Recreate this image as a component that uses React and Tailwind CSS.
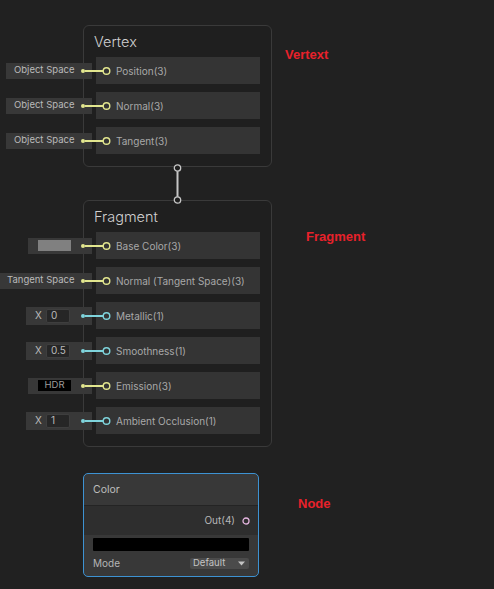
import React from "react";

const YELLOW = "#e2e68e";
const CYAN = "#7fd4dc";
const PINK = "#e3b4de";

const vertexPorts = [
  { label: "Position(3)", color: YELLOW, input: { kind: "text", text: "Object Space", box: "w-[86px] pl-[8px]" } },
  { label: "Normal(3)", color: YELLOW, input: { kind: "text", text: "Object Space", box: "w-[86px] pl-[8px]" } },
  { label: "Tangent(3)", color: YELLOW, input: { kind: "text", text: "Object Space", box: "w-[86px] pl-[8px]" } },
];

const fragmentPorts = [
  { label: "Base Color(3)", color: YELLOW, input: { kind: "swatch" } },
  { label: "Normal (Tangent Space)(3)", color: YELLOW, input: { kind: "text", text: "Tangent Space", box: "w-[92px] pl-[7px]" } },
  { label: "Metallic(1)", color: CYAN, input: { kind: "float", value: "0" } },
  { label: "Smoothness(1)", color: CYAN, input: { kind: "float", value: "0.5" } },
  { label: "Emission(3)", color: YELLOW, input: { kind: "hdr" } },
  { label: "Ambient Occlusion(1)", color: CYAN, input: { kind: "float", value: "1" } },
];

function InputField({ input }) {
  if (input.kind === "text") {
    return (
      <div className={`h-[16px] bg-[#383838] flex items-center text-[9.5px] text-[#bababa] ${input.box}`}>
        {input.text}
      </div>
    );
  }
  if (input.kind === "swatch") {
    return (
      <div className="h-[16px] w-[64px] bg-[#383838] flex items-center pl-[10px]">
        <div className="h-[11px] w-[33px] bg-[#808080]" />
      </div>
    );
  }
  if (input.kind === "hdr") {
    return (
      <div className="h-[16px] w-[64px] bg-[#383838] flex items-center pl-[10px]">
        <div className="h-[11px] w-[33px] bg-black flex items-center justify-center text-[9.5px] text-[#9c9c9c]">
          HDR
        </div>
      </div>
    );
  }
  return (
    <div className="h-[18px] w-[66px] bg-[#383838] flex items-center pl-[9px] text-[10px] text-[#bababa]">
      <span className="w-[11px]">X</span>
      <div className="h-[14px] w-[24px] bg-[#262626] border border-[#3e3e3e] rounded-[2px] flex items-center pl-[4px]">
        {input.value}
      </div>
    </div>
  );
}

// dot on the field, short wire and the open port circle
function Wire({ color }) {
  return (
    <svg className="absolute left-[79px] top-0" width="34" height="27">
      <circle cx="4" cy="14" r="2" fill={color} />
      <line x1="6" y1="14" x2="24" y2="14" stroke={color} strokeWidth="2" />
      <circle cx="27.5" cy="14" r="3.3" fill="#343434" stroke={color} strokeWidth="1.4" />
    </svg>
  );
}

function PortRow({ port }) {
  return (
    <div className="relative flex h-[27px] -ml-[96px]">
      <div className="w-[96px] flex items-center justify-end pr-[4px]">
        <InputField input={port.input} />
      </div>
      <div className="flex-1 bg-[#343434] flex items-center pl-[20px] pt-[2px] text-[10px] text-[#a8a8a8]">
        {port.label}
      </div>
      <Wire color={port.color} />
    </div>
  );
}

function MasterNode({ title, ports }) {
  return (
    <div className="ml-[83px] w-[189px] bg-[#1f1f1f] border border-[#3a3a3a] rounded-[6px] pl-[12px] pr-[11px] pb-[12px]">
      <div className="h-[31px] flex items-center -ml-[2px] text-[14.5px] font-light text-[#d0d0d0]">{title}</div>
      <div className="flex flex-col gap-[8px]">
        {ports.map((p) => (
          <PortRow key={p.label} port={p} />
        ))}
      </div>
    </div>
  );
}

function Note({ children, className }) {
  return (
    <div
      className={`text-[13px] font-bold text-[#e8212b] leading-[15px] ${className}`}
      style={{ fontFamily: '"Liberation Sans", Arial, sans-serif' }}
    >
      {children}
    </div>
  );
}

export default function App() {
  return (
    <div
      className="w-[494px] h-[589px] bg-[#212121] overflow-hidden flex flex-col"
      style={{ fontFamily: 'Inter, "Noto Sans", sans-serif' }}
    >
      <div className="flex items-start mt-[25px]">
        <MasterNode title="Vertex" ports={vertexPorts} />
        <Note className="ml-[13px] mt-[22px]">Vertext</Note>
      </div>

      <svg className="ml-[173px] -mt-[4px] -mb-[5px] relative z-10" width="9" height="42">
        <line x1="4.5" y1="8" x2="4.5" y2="34" stroke="#c6c6c6" strokeWidth="2" />
        <circle cx="4.5" cy="5" r="3.2" fill="#1f1f1f" stroke="#c6c6c6" strokeWidth="1.3" />
        <circle cx="4.5" cy="37" r="3.2" fill="#1f1f1f" stroke="#c6c6c6" strokeWidth="1.3" />
      </svg>

      <div className="flex items-start">
        <MasterNode title="Fragment" ports={fragmentPorts} />
        <Note className="ml-[34px] mt-[29px]">Fragment</Note>
      </div>

      <div className="flex items-start mt-[26px]">
        <div className="ml-[83px] w-[176px] h-[104px] border border-[#3d92d2] rounded-[5px] overflow-hidden flex flex-col bg-[#383838]">
          <div className="h-[32px] flex items-center pl-[9px] text-[10.5px] text-[#bdbdbd] border-b border-[#242424]">
            Color
          </div>
          <div className="h-[29px] bg-[#2e2e2e] flex items-center justify-end pr-[8px] gap-[7px] text-[10px] text-[#b6b6b6]">
            <span>Out(4)</span>
            <svg width="8" height="8">
              <circle cx="4" cy="4" r="3" fill="none" stroke={PINK} strokeWidth="1.3" />
            </svg>
          </div>
          <div className="flex-1 flex flex-col px-[9px] pt-[3px]">
            <div className="h-[13px] bg-black rounded-[1px]" />
            <div className="flex items-center justify-between mt-[5px] text-[10px] text-[#b4b4b4]">
              <span>Mode</span>
              <div className="w-[59px] h-[11px] bg-[#4b4b4b] rounded-[2px] flex items-center justify-between pl-[3px] pr-[4px] text-[9.5px] text-[#c4c4c4]">
                <span>Default</span>
                <svg width="7" height="5">
                  <path d="M0 0.5 L7 0.5 L3.5 4.5 Z" fill="#c4c4c4" />
                </svg>
              </div>
            </div>
          </div>
        </div>
        <Note className="ml-[39px] mt-[23px]">Node</Note>
      </div>
    </div>
  );
}
